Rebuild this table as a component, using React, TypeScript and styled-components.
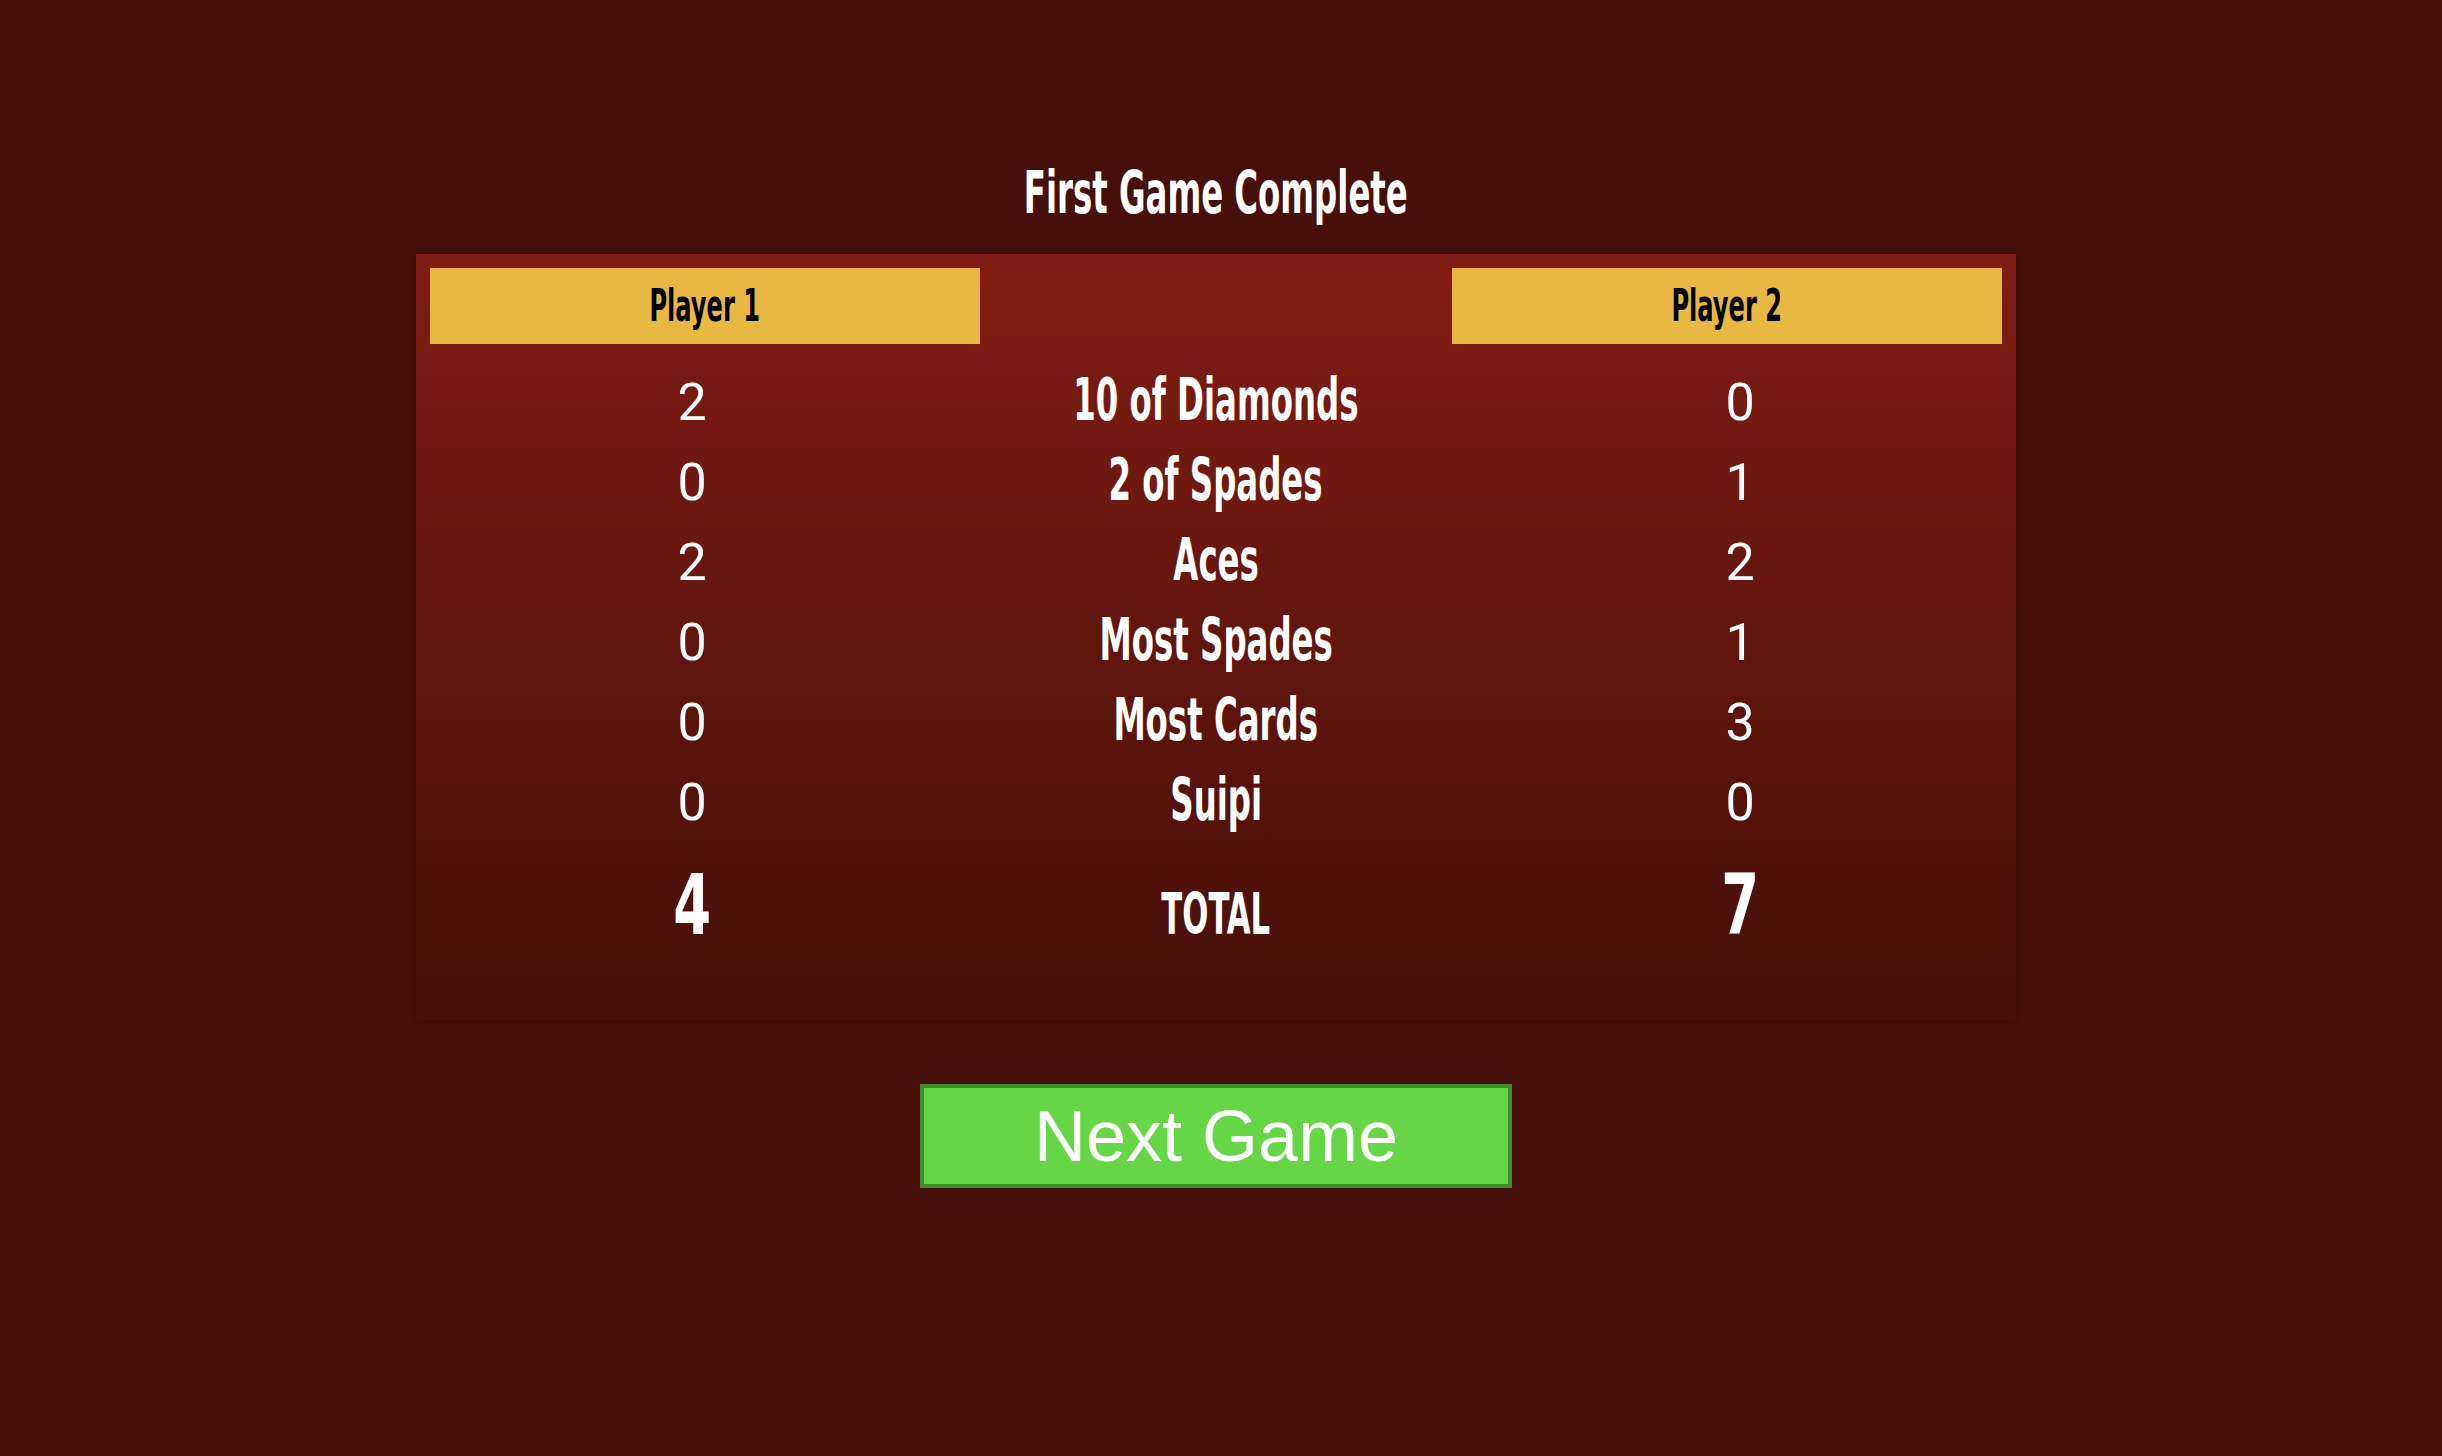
import React from "react";
import styled, { createGlobalStyle } from "styled-components";

const Global = createGlobalStyle`
  html, body { margin: 0; padding: 0; background: #460f0a; }
  body { font-family: "Liberation Sans", Arial, sans-serif; }
`;

const Page = styled.div`
  min-height: 1456px;
  display: flex;
  flex-direction: column;
  align-items: center;
  padding: 163px 10px 0 0;
  box-sizing: border-box;
`;

const Condensed = styled.span<{ $sx?: number }>`
  display: inline-block;
  font-family: "DejaVu Sans Condensed", "DejaVu Sans", sans-serif;
  font-stretch: condensed;
  font-weight: 700;
  transform: scaleX(${(p) => p.$sx ?? 0.61});
  transform-origin: center;
  white-space: nowrap;
`;

const Title = styled.h1`
  margin: 0;
  height: 59px;
  font-size: 59px;
  line-height: 59px;
  color: #fff;
  font-weight: 700;
`;

const Panel = styled.section`
  margin-top: 32px;
  width: 1600px;
  box-sizing: border-box;
  padding: 14px 14px 73px;
  background: linear-gradient(180deg, #821d14 0%, #5e150d 55%, #470f0a 100%);
  box-shadow: 0 0 6px rgba(0, 0, 0, 0.25);
`;

const HeaderRow = styled.div`
  display: grid;
  grid-template-columns: 550px 1fr 550px;
  height: 76px;
  margin-bottom: 16px;
`;

const PlayerHead = styled.div`
  background: #e8b842;
  color: #000;
  display: flex;
  align-items: center;
  justify-content: center;
  font-size: 44px;
  line-height: 1;
`;

const Row = styled.div<{ $total?: boolean }>`
  display: grid;
  grid-template-columns: 1fr 1fr 1fr;
  align-items: baseline;
  height: ${(p) => (p.$total ? "auto" : "80px")};
  padding-top: ${(p) => (p.$total ? "23px" : "0")};
  color: #fff;
`;

const Score = styled.div`
  text-align: center;
  font-family: Roboto, "Open Sans", sans-serif;
  font-weight: 400;
  font-size: 52px;
  line-height: 1;
`;

const Label = styled.div<{ $small?: boolean }>`
  text-align: center;
  font-size: ${(p) => (p.$small ? "57px" : "59px")};
  line-height: ${(p) => (p.$small ? "57px" : "80px")};
`;

const TotalScore = styled.div`
  text-align: center;
  font-size: 84px;
  line-height: 84px;
`;

const NextButton = styled.button`
  margin-top: 64px;
  width: 592px;
  height: 104px;
  box-sizing: border-box;
  border: 4px solid #3f8e2a;
  background: #66d646;
  color: #fff;
  font-family: "Liberation Sans", Arial, sans-serif;
  font-size: 72px;
  line-height: 1;
  padding: 0;
  cursor: pointer;
`;

const rows: [number, string, number][] = [
  [2, "10 of Diamonds", 0],
  [0, "2 of Spades", 1],
  [2, "Aces", 2],
  [0, "Most Spades", 1],
  [0, "Most Cards", 3],
  [0, "Suipi", 0],
];

export default function App() {
  return (
    <>
      <Global />
      <Page>
        <Title>
          <Condensed $sx={0.61}>First Game Complete</Condensed>
        </Title>
        <Panel>
          <HeaderRow>
            <PlayerHead>
              <Condensed $sx={0.61}>Player 1</Condensed>
            </PlayerHead>
            <div />
            <PlayerHead>
              <Condensed $sx={0.61}>Player 2</Condensed>
            </PlayerHead>
          </HeaderRow>
          {rows.map(([a, label, b]) => (
            <Row key={label}>
              <Score>{a}</Score>
              <Label>
                <Condensed $sx={0.61}>{label}</Condensed>
              </Label>
              <Score>{b}</Score>
            </Row>
          ))}
          <Row $total>
            <TotalScore>
              <Condensed $sx={0.72}>4</Condensed>
            </TotalScore>
            <Label $small>
              <Condensed $sx={0.6}>TOTAL</Condensed>
            </Label>
            <TotalScore>
              <Condensed $sx={0.72}>7</Condensed>
            </TotalScore>
          </Row>
        </Panel>
        <NextButton>Next Game</NextButton>
      </Page>
    </>
  );
}
